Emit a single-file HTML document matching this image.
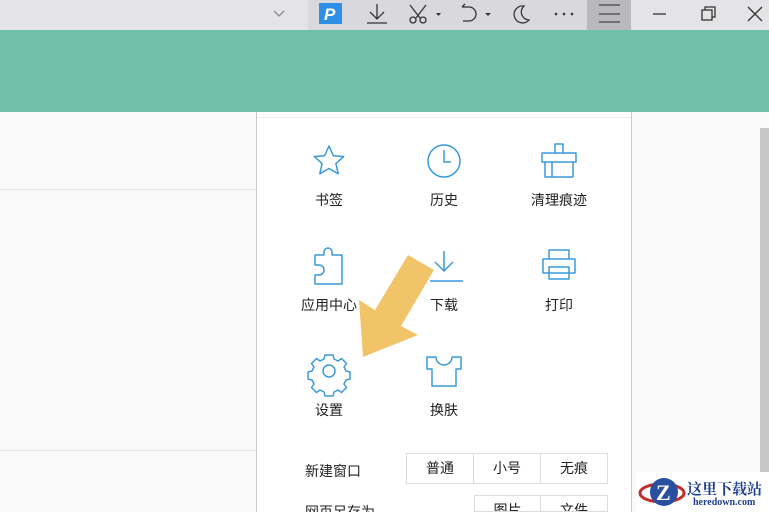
<!DOCTYPE html>
<html style="width:769px;height:512px;overflow:hidden"><head><meta charset="utf-8"><style>
*{margin:0;padding:0;box-sizing:border-box}
body{width:769px;height:512px;overflow:hidden;position:relative;background:#f9f9f9;font-family:"Liberation Sans","Noto Sans CJK SC",sans-serif;color:#222}
.a{position:absolute}
.lbl{position:absolute;font-size:14px;width:120px;text-align:center;line-height:16px}
.cell{position:absolute;border:1px solid #ddd;background:#fff;font-size:14px;text-align:center;line-height:29px}
</style></head><body>
<div class="a" style="left:0;top:0;width:769px;height:30px;background:#e4e4e6"></div>
<div class="a" style="left:308px;top:0;width:279px;height:30px;background:#d9d9dd"></div>
<div class="a" style="left:587px;top:0;width:44px;height:30px;background:#b9b9bd"></div>
<svg class="a" style="left:0;top:0" width="769" height="30" fill="none" stroke="#333" stroke-width="1.3">
<path d="M274 11l5 5 5-5" stroke="#888"/>
<rect x="319" y="3" width="23" height="21" fill="#2d8fe8" stroke="none"/>
<text x="324" y="20" font-family="Liberation Sans" font-style="italic" font-weight="bold" font-size="17" fill="#fff" stroke="none">P</text>
<path d="M377 4v15M370 12l7 7 7-7M367 23h20"/>
<path d="M410 5l10 13M426 5l-10 13"/><circle cx="413" cy="20" r="3"/><circle cx="423" cy="20" r="3"/>
<path d="M436 13h5l-2.5 3z" fill="#333" stroke="none"/>
<path d="M462 7h7a7 7 0 0 1 0 14h-6M462 7l3-3" />
<path d="M485 13h6l-3 3z" fill="#333" stroke="none"/>
<path d="M524 6a8.5 8.5 0 1 0 5 14a8 8 0 0 1-5-14z"/>
<g fill="#333" stroke="none"><circle cx="556" cy="14" r="1.3"/><circle cx="564" cy="14" r="1.3"/><circle cx="572" cy="14" r="1.3"/></g>
<path d="M599 5h21M599 14h21M599 22h21" stroke="#444"/>
<path d="M653 14h13"/>
<rect x="702" y="10" width="10" height="10"/><path d="M705 10V7h10v10h-3"/>
<path d="M748 7l14 14M762 7l-14 14"/>
</svg>
<div class="a" style="left:0;top:30px;width:769px;height:82px;background:#72bfa8"></div>
<div class="a" style="left:0;top:189px;width:256px;height:1px;background:#e6e6e6"></div>
<div class="a" style="left:0;top:450px;width:256px;height:1px;background:#e6e6e6"></div>
<div class="a" style="left:256px;top:112px;width:376px;height:400px;background:#fff;border-left:1px solid #c8c8c8;border-right:1px solid #ccc"></div>
<div class="a" style="left:257px;top:117px;width:374px;height:1px;background:#eee"></div>
<div class="a" style="left:760px;top:128px;width:9px;height:384px;background:#c6c6c6"></div>
<svg class="a" style="left:0;top:0" width="769" height="512" fill="none" stroke="#3a9ad9" stroke-width="1.5" stroke-linejoin="round">
<path d="M329 146l4.3 9.6 10.4 1-7.8 7 2.3 10.2-9.2-5.3-9.2 5.3 2.3-10.2-7.8-7 10.4-1z"/>
<circle cx="444" cy="161" r="16"/><path d="M444 150v12h7"/>
<path d="M555 144h8v9h-8zM542 153h34v9h-34zM545 162v15h28v-15M552 162v15"/>
<path d="M315 255h9v-3a4 4 0 0 1 8 0v3h10v29h-27v-9h4a5 5 0 0 0 0-10h-4z"/>
<path d="M444 251v20M435 262l9 9 9-9M430 281h33"/>
<path d="M549 250h20v9h-20zM543 259h32v14h-32zM549 267h20v12h-20z"/>
<path d="M325 355h8l1 4 4 2 3.5-2.5 5 5-2.5 3.5 2 4 4 1v7l-4 1-2 4 2.5 3.5-5 5-3.5-2.5-4 2-1 4h-8l-1-4-4-2-3.5 2.5-5-5 2.5-3.5-2-4-4-1v-7l4-1 2-4-2.5-3.5 5-5 3.5 2.5 4-2z"/>
<circle cx="329" cy="371" r="6"/>
<path d="M427 357h9a8 8 0 0 0 16 0h9v12h-5v17h-24v-17h-5z"/>
<polygon points="408,255 434,270 401,326 418,335 363,357 359,300 375,310" fill="#f2c46a" stroke="none"/>
</svg>
<div class="lbl" style="left:269px;top:192px">书签</div>
<div class="lbl" style="left:384px;top:192px">历史</div>
<div class="lbl" style="left:499px;top:192px">清理痕迹</div>
<div class="lbl" style="left:269px;top:297px">应用中心</div>
<div class="lbl" style="left:384px;top:297px">下载</div>
<div class="lbl" style="left:499px;top:297px">打印</div>
<div class="lbl" style="left:269px;top:402px">设置</div>
<div class="lbl" style="left:384px;top:402px">换肤</div>
<div class="a" style="left:305px;top:461px;font-size:14px">新建窗口</div>
<div class="cell" style="left:406px;top:453px;width:68px;height:31px">普通</div>
<div class="cell" style="left:473px;top:453px;width:68px;height:31px">小号</div>
<div class="cell" style="left:540px;top:453px;width:68px;height:31px">无痕</div>
<div class="a" style="left:305px;top:502px;font-size:14px">网页另存为</div>
<div class="cell" style="left:474px;top:495px;width:67px;height:17px;line-height:29px;overflow:hidden">图片</div>
<div class="cell" style="left:540px;top:495px;width:68px;height:17px;line-height:29px;overflow:hidden">文件</div>
<div class="a" style="left:636px;top:472px;width:133px;height:40px;background:#fff"></div>
<svg class="a" style="left:636px;top:472px" width="50" height="40">
<ellipse cx="26" cy="21" rx="22" ry="9" fill="none" stroke="#c0302a" stroke-width="3"/>
<circle cx="28" cy="20" r="14" fill="#2a4fa0"/>
<text x="20" y="28" font-family="Liberation Serif" font-weight="bold" font-size="22" fill="#fff">Z</text>
</svg>
<div class="a" style="left:687px;top:478px;font-size:15px;font-weight:bold;color:#1e3f8f;font-family:'Liberation Serif','Noto Serif CJK SC',serif">这里下载站</div>
<div class="a" style="left:693px;top:497px;font-size:10px;font-weight:bold;color:#1e3f8f;font-family:'Liberation Serif',serif">heredown.com</div>
</body></html>
